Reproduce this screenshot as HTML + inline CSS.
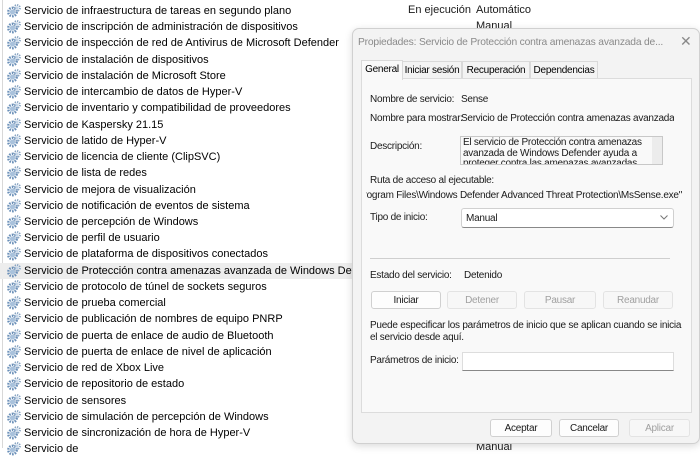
<!DOCTYPE html>
<html><head><meta charset="utf-8"><style>
body{margin:0;width:700px;height:448px;overflow:hidden;background:#fff;font-family:"Liberation Sans",sans-serif;position:relative}
.row{position:absolute;left:0;width:700px;height:16px;font-size:11px;line-height:16px;color:#000;white-space:nowrap}
.row span{position:absolute;left:24px}
.row svg{position:absolute;left:7px;top:1px}
.a{position:absolute;white-space:nowrap;font-size:11px;color:#1a1a1a}
.x{font-size:10px;letter-spacing:-0.25px;margin-top:1px}
.d{position:absolute;left:352px;top:28px;width:346px;height:414px;background:#f3f3f3;border:1px solid #d0d0d0;border-radius:7px;box-shadow:0 2px 8px rgba(0,0,0,.15)}
.btn{position:absolute;height:16px;border:1px solid #d0d0d0;border-radius:3px;background:#fdfdfd;font-size:10px;letter-spacing:-0.25px;text-align:center;line-height:17px;color:#1a1a1a;white-space:nowrap}
.dis{color:#a0a0a0;background:#f7f7f7;border-color:#e3e3e3}
.tab{position:absolute;top:61px;height:16px;font-size:10px;letter-spacing:-0.25px;line-height:18px;text-align:center;border:1px solid #d9d9d9;border-bottom:none;background:#f3f3f3;white-space:nowrap}
</style></head><body>
<div style="position:absolute;left:2px;top:0;width:1px;height:448px;background:#d8d8d8"></div>
<div id="list"></div>
<div class="a" style="left:408px;top:4px">En ejecución</div>
<div class="a" style="left:476px;top:4px">Automático</div>
<div class="a" style="left:476px;top:20px">Manual</div>
<div class="a" style="left:476px;top:441px">Manual</div>
<div class="a" style="left:694px;top:248px">)</div>
<div class="d"></div>
<div class="a x" style="left:358px;top:36px;color:#8a8a8a;font-size:10.3px;letter-spacing:-0.2px">Propiedades: Servicio de Protección contra amenazas avanzada de...</div>
<div class="a" style="left:680px;top:33px;color:#888;font-size:14px">✕</div>
<div style="position:absolute;left:361px;top:78px;width:329px;height:333px;background:#f9f9f9;border:1px solid #dcdcdc"></div>
<div class="tab" style="left:361px;width:40px;top:60px;height:19px;background:#f9f9f9">General</div>
<div class="tab" style="left:402px;width:58px">Iniciar sesión</div>
<div class="tab" style="left:462px;width:66px">Recuperación</div>
<div class="tab" style="left:530px;width:66px">Dependencias</div>
<div class="a x" style="left:370px;top:93px">Nombre de servicio:</div>
<div class="a x" style="left:461px;top:93px">Sense</div>
<div class="a x" style="left:370px;top:112px">Nombre para mostrar:</div>
<div class="a x" style="left:461px;top:112px;width:213px;overflow:hidden">Servicio de Protección contra amenazas avanzada de</div>
<div class="a x" style="left:370px;top:140px">Descripción:</div>
<div style="position:absolute;left:460px;top:136px;width:201px;height:27px;border:1px solid #c8c8c8;background:#f9f9f9;overflow:hidden"><div style="position:absolute;right:0;top:0;width:10px;height:27px;background:#ececec"></div><div class="x" style="line-height:10.5px;padding:0 2px;width:190px;color:#1a1a1a">El servicio de Protección contra amenazas avanzada de Windows Defender ayuda a proteger contra las amenazas avanzadas</div></div>
<div class="a x" style="left:370px;top:174px">Ruta de acceso al ejecutable:</div>
<div style="position:absolute;left:366px;top:189px;width:316px;height:15px;overflow:hidden"><div class="x" style="position:absolute;right:0;top:0;white-space:nowrap;color:#1a1a1a">"C:\Program Files\Windows Defender Advanced Threat Protection\MsSense.exe"</div></div>
<div class="a x" style="left:370px;top:211px">Tipo de inicio:</div>
<div style="position:absolute;left:461px;top:208px;width:211px;height:18px;border:1px solid #d0d0d0;border-bottom-color:#888;border-radius:3px;background:#fff"></div>
<div class="a x" style="left:466px;top:212px">Manual</div>
<svg style="position:absolute;left:660px;top:215px" width="8" height="5"><path d="M0.5 0.5L4 4L7.5 0.5" fill="none" stroke="#777"/></svg>
<div style="position:absolute;left:370px;top:258px;width:300px;height:1px;background:#cfcfcf"></div>
<div class="a x" style="left:370px;top:269px">Estado del servicio:</div>
<div class="a x" style="left:464px;top:269px">Detenido</div>
<div class="btn" style="left:371px;top:291px;width:68px">Iniciar</div>
<div class="btn dis" style="left:447px;top:291px;width:68px">Detener</div>
<div class="btn dis" style="left:524px;top:291px;width:70px">Pausar</div>
<div class="btn dis" style="left:603px;top:291px;width:68px">Reanudar</div>
<div class="a x" style="left:370px;top:319px">Puede especificar los parámetros de inicio que se aplican cuando se inicia</div>
<div class="a x" style="left:370px;top:331px">el servicio desde aquí.</div>
<div class="a x" style="left:370px;top:354px">Parámetros de inicio:</div>
<div style="position:absolute;left:462px;top:352px;width:210px;height:17px;border:1px solid #ddd;border-bottom-color:#888;background:#fff"></div>
<div class="btn" style="left:490px;top:419px;width:60px">Aceptar</div>
<div class="btn" style="left:559px;top:419px;width:58px">Cancelar</div>
<div class="btn dis" style="left:629px;top:419px;width:59px">Aplicar</div>
<script>
var items=["Servicio de infraestructura de tareas en segundo plano","Servicio de inscripción de administración de dispositivos","Servicio de inspección de red de Antivirus de Microsoft Defender","Servicio de instalación de dispositivos","Servicio de instalación de Microsoft Store","Servicio de intercambio de datos de Hyper-V","Servicio de inventario y compatibilidad de proveedores","Servicio de Kaspersky 21.15","Servicio de latido de Hyper-V","Servicio de licencia de cliente (ClipSVC)","Servicio de lista de redes","Servicio de mejora de visualización","Servicio de notificación de eventos de sistema","Servicio de percepción de Windows","Servicio de perfil de usuario","Servicio de plataforma de dispositivos conectados","Servicio de Protección contra amenazas avanzada de Windows Defender","Servicio de protocolo de túnel de sockets seguros","Servicio de prueba comercial","Servicio de publicación de nombres de equipo PNRP","Servicio de puerta de enlace de audio de Bluetooth","Servicio de puerta de enlace de nivel de aplicación","Servicio de red de Xbox Live","Servicio de repositorio de estado","Servicio de sensores","Servicio de simulación de percepción de Windows","Servicio de sincronización de hora de Hyper-V","Servicio de"];
var icon='<svg width="14" height="14" viewBox="0 0 14 14"><circle cx="5.5" cy="8" r="4.2" fill="none" stroke="#6a8fb8" stroke-width="2.4" stroke-dasharray="1.6 1.1"/><circle cx="5.5" cy="8" r="2.6" fill="#a9c2dc"/><circle cx="10" cy="4" r="3" fill="none" stroke="#8aa6c4" stroke-width="1.8" stroke-dasharray="1.3 1"/><circle cx="10" cy="4" r="1.6" fill="#c5d6e8"/></svg>';
var h='';
for(var i=0;i<items.length;i++){var t=3+i*16.23;h+='<div class="row" style="top:'+t+'px;'+(i==16?'background:#ededed':'')+'">'+icon+'<span>'+items[i]+'</span></div>';}
document.getElementById('list').innerHTML=h;
</script>
</body></html>
